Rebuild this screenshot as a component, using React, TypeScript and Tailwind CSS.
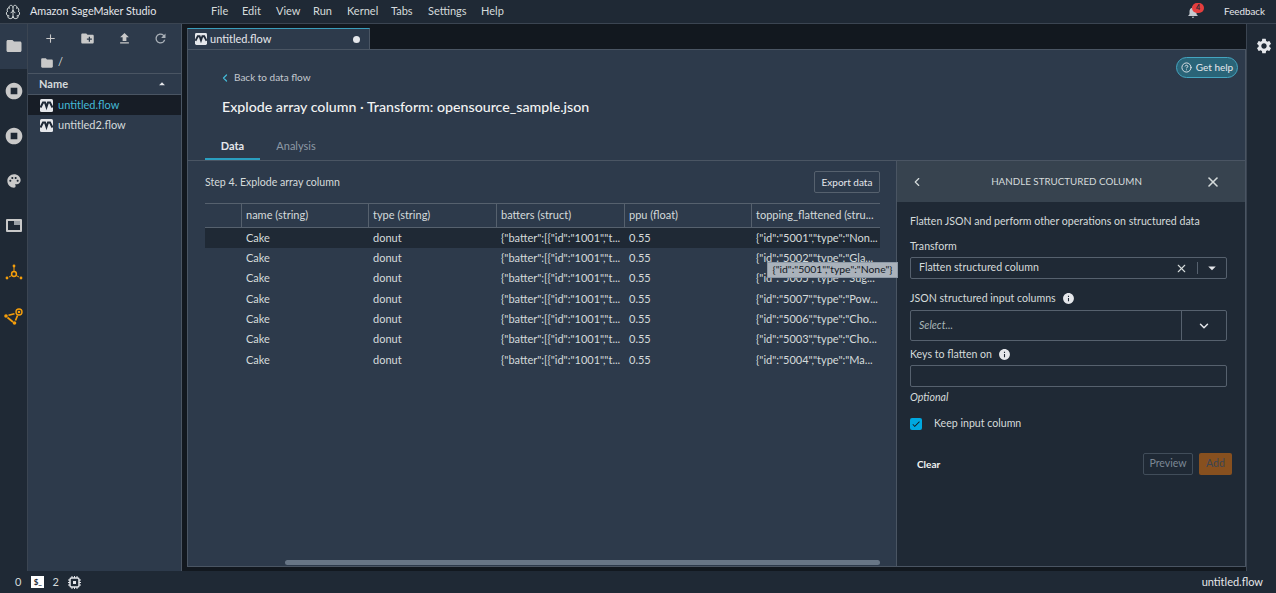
import { Brain, ChevronDown, ChevronLeft, CircleHelp, Plus, X } from 'lucide-react'
import {
  MdCheck, MdCreateNewFolder, MdFileUpload, MdFolder, MdInfo, MdNotifications,
  MdPalette, MdRefresh, MdSettings, MdStopCircle, MdArrowDropDown, MdArrowDropUp,
} from 'react-icons/md'

const MENU = [
  { label: 'File', w: 'w-[31px]' },
  { label: 'Edit', w: 'w-[34px]' },
  { label: 'View', w: 'w-[37px]' },
  { label: 'Run', w: 'w-[34px]' },
  { label: 'Kernel', w: 'w-[44px]' },
  { label: 'Tabs', w: 'w-[37px]' },
  { label: 'Settings', w: 'w-[53px]' },
  { label: 'Help', w: 'w-[30px]' },
]

const COLUMNS = [
  { label: 'name (string)', w: 'w-[127px]' },
  { label: 'type (string)', w: 'w-[128px]' },
  { label: 'batters (struct)', w: 'w-[128px]' },
  { label: 'ppu (float)', w: 'w-[127px]' },
  { label: 'topping_flattened (stru...', w: 'w-[128px]' },
]

const TOPPINGS = ['Non...', 'Gla...', 'Sug...', 'Pow...', 'Cho...', 'Cho...', 'Ma...']
const IDS = ['5001', '5002', '5005', '5007', '5006', '5003', '5004']

function FlowIcon({ size = 13 }: { size?: number }) {
  return (
    <svg width={size} height={size} viewBox="0 0 13 13" className="shrink-0">
      <rect width="13" height="13" rx="1.5" fill="#e5e7eb" />
      <path d="M0.5 8.5 L3 3.5 L5 3.5 L6.5 8 L8 3.5 L10 3.5 L12.5 8.5" fill="none" stroke="#1f2937" strokeWidth="2" />
    </svg>
  )
}

function OrangeNodes() {
  return (
    <svg width="18" height="16" viewBox="0 0 18 16" fill="#f59e0b" stroke="#f59e0b">
      <circle cx="9" cy="2" r="1.4" stroke="none" />
      <circle cx="2" cy="14" r="1.4" stroke="none" />
      <circle cx="16" cy="14" r="1.4" stroke="none" />
      <circle cx="9" cy="10" r="2.4" fill="none" strokeWidth="1.5" />
      <path d="M9 3v4M6.800 11.500L4 13M11.200 11.500L14 13" strokeWidth="1" />
    </svg>
  )
}

function OrangeGraph() {
  return (
    <svg width="19" height="17" viewBox="0 0 19 17" fill="#f59e0b" stroke="#f59e0b">
      <circle cx="2" cy="8" r="1.800" stroke="none" />
      <circle cx="10.500" cy="15" r="1.800" stroke="none" />
      <circle cx="15" cy="4" r="3" fill="none" strokeWidth="1.400" />
      <circle cx="15" cy="4" r="1.300" stroke="none" />
      <path d="M4.500 7.300L10.500 5.700M3.500 9.500L9 14M11.500 12.500L13.500 7.500" strokeWidth="1.700" />
    </svg>
  )
}

function RailItem({ children, active }: { children: React.ReactNode; active?: boolean }) {
  return (
    <div className={`flex h-[45px] items-center justify-center ${active ? 'bg-[#2d3a4b]' : ''}`}>
      {children}
    </div>
  )
}

function Cell({ children, w }: { children: React.ReactNode; w: string }) {
  return <div className={`${w} whitespace-nowrap pl-[4px] text-[#d5dbdb]`}>{children}</div>
}

export default function App() {
  return (
    <div className="flex h-[593px] w-[1276px] flex-col overflow-hidden bg-[#1f2935] font-['Lato',sans-serif] text-[11px] text-[#d5dbdb]">
      {/* top bar */}
      <header className="flex h-[24px] shrink-0 items-center border-b border-[#3b4552] pl-[5px]">
        <Brain size={16} strokeWidth={1.5} className="text-[#d5dbdb]" />
        <span className="ml-[9px] w-[181px] text-[10.8px] text-[#e5e7eb]">Amazon SageMaker Studio</span>
        {MENU.map(m => (
          <span key={m.label} className={`${m.w} text-[#d5dbdb]`}>{m.label}</span>
        ))}
        <div className="relative ml-auto mr-[11px] flex">
          <MdNotifications size={14} className="text-[#c5cad0]" />
          <span className="absolute left-[6px] top-[-2px] flex h-[10px] w-[12px] items-center justify-center rounded-full bg-[#e53e3e] text-[7px] font-bold text-[#1f2935]">4</span>
        </div>
        <span className="ml-[13px] mr-[11px] text-[9.8px] text-[#e5e7eb]">Feedback</span>
      </header>

      <div className="flex min-h-0 flex-1">
        {/* left rail */}
        <nav className="w-[28px] shrink-0 border-r border-[#3b4552]">
          <RailItem active><MdFolder size={18} className="-mt-[2px] text-[#c9c9c9]" /></RailItem>
          <RailItem><MdStopCircle size={20} className="-mt-[2px] text-[#c9c9c9]" /></RailItem>
          <RailItem><MdStopCircle size={20} className="-mt-[2px] text-[#c9c9c9]" /></RailItem>
          <RailItem><MdPalette size={16} className="-mt-[2px] text-[#c9c9c9]" /></RailItem>
          <RailItem>
            <div className="-mt-[2px] h-[13px] w-[16px] rounded-[1px] border-2 border-[#c9c9c9] bg-[#1f2935]">
              <div className="ml-auto h-[4px] w-[6px] bg-[#9aa0a6]" />
            </div>
          </RailItem>
          <RailItem><OrangeNodes /></RailItem>
          <RailItem><OrangeGraph /></RailItem>
        </nav>

        {/* file browser */}
        <aside className="w-[154px] shrink-0 border-r border-[#4a5563] bg-[#2d3a4b]">
          <div className="flex h-[28px] items-center text-[#c9c9c9]">
            <div className="flex w-[44px] justify-center"><Plus size={13} /></div>
            <div className="flex w-[30px] justify-center"><MdCreateNewFolder size={15} /></div>
            <div className="flex w-[44px] justify-center"><MdFileUpload size={15} /></div>
            <div className="flex w-[28px] justify-center"><MdRefresh size={15} className="text-[#a9b0b8]" /></div>
          </div>
          <div className="flex h-[21px] items-center gap-[4px] pl-[12px] text-[#d5dbdb]">
            <MdFolder size={14} className="text-[#c9c9c9]" /> /
          </div>
          <div className="flex h-[22px] items-center justify-between border-y border-[#4a5563] pl-[11px] pr-[12px] font-bold text-[#d5dbdb]">
            Name
            <MdArrowDropUp size={14} className="text-[#e5e7eb]" />
          </div>
          <div className="flex h-[20px] items-center gap-[5px] bg-[#171d26] pl-[12px] text-[#44b9d6]">
            <FlowIcon /> untitled.flow
          </div>
          <div className="flex h-[20px] items-center gap-[5px] pl-[12px] text-[#d5dbdb]">
            <FlowIcon /> untitled2.flow
          </div>
        </aside>

        {/* main dock area */}
        <main className="flex w-[1064px] shrink-0 flex-col bg-[#12181f] pb-[4px] pl-[5px]">
          <div className="flex h-[25px] shrink-0 items-end">
            <div className="flex h-[21px] w-[183px] items-center border-x border-t border-[#4a5563] border-t-[#3a9dbb] bg-[#2d3a4b] pl-[7px] pr-[9px] text-[#e5e7eb]">
              <FlowIcon size={12} />
              <span className="ml-[3px]">untitled.flow</span>
              <span className="ml-auto h-[7px] w-[7px] rounded-full bg-[#e5e7eb]" />
            </div>
          </div>

          <div className="relative flex min-h-0 flex-1 flex-col border border-[#4a5563] bg-[#2d3a4b]">
            {/* page header */}
            <div className="h-[111px] shrink-0 border-b border-[#4a5563]">
              <div className="flex items-start justify-between pl-[31px] pr-[7px] pt-[7px]">
                <div className="mt-[13px] flex items-center gap-[3px] text-[10px] text-[#c5cad0]">
                  <ChevronLeft size={12} strokeWidth={2.5} className="text-[#44b9d6]" />
                  Back to data flow
                </div>
                <div className="flex h-[21px] w-[62px] items-center justify-center gap-[4px] rounded-full border border-[#44a5c0] bg-[#2a6478] text-[10px] text-[#e5e7eb]">
                  <CircleHelp size={11} /> Get help
                </div>
              </div>
              <h1 className="mt-[12px] pl-[34px] text-[14.2px] font-medium leading-[20px] text-[#f2f3f3]">
                Explode array column · Transform: opensource_sample.json
              </h1>
              <div className="mt-[16px] flex pl-[17px]">
                <div className="flex h-[27px] w-[55px] justify-center border-b-2 border-[#2a9fc0] pt-[5px] font-bold text-[#e5e7eb]">Data</div>
                <div className="w-[72px] pt-[5px] text-center text-[#8d99a6]">Analysis</div>
              </div>
            </div>

            <div className="flex min-h-0 flex-1">
              {/* data grid */}
              <section className="w-[708px] shrink-0 pl-[17px] pr-[16px]">
                <div className="flex h-[42px] items-center justify-between">
                  <span className="pt-[1px] text-[10.6px] text-[#d5dbdb]">Step 4. Explode array column</span>
                  <button className="flex h-[22px] w-[66px] items-center justify-center rounded-[2px] border border-[#56616e] text-[10px] text-[#e5e7eb]">Export data</button>
                </div>
                <div className="flex h-[25px] items-center border-y border-[#56616e]">
                  <div className="h-full w-[37px] border-r border-[#56616e]" />
                  {COLUMNS.map(c => (
                    <div key={c.label} className={`${c.w} flex h-full items-center whitespace-nowrap border-r border-[#56616e] pl-[4px] last:border-r-0`}>{c.label}</div>
                  ))}
                </div>
                {TOPPINGS.map((t, i) => (
                  <div key={i} className={`flex h-[20.3px] items-center ${i === 0 ? 'bg-[#1f2935]' : ''}`}>
                    <div className="w-[37px]" />
                    <Cell w="w-[127px]">Cake</Cell>
                    <Cell w="w-[128px]">donut</Cell>
                    <Cell w="w-[128px]">{'{"batter":[{"id":"1001","t...'}</Cell>
                    <Cell w="w-[127px]">0.55</Cell>
                    <Cell w="w-[128px]">{`{"id":"${IDS[i]}","type":"${t}`}</Cell>
                  </div>
                ))}
              </section>

              {/* side panel */}
              <section className="flex-1 border-l border-[#4a5563] bg-[#1f2935] text-[10.6px]">
                <div className="flex h-[41px] items-center bg-[#37434f] pl-[13px] pr-[24px]">
                  <ChevronLeft size={14} strokeWidth={2} className="text-[#d5dbdb]" />
                  <span className="flex-1 pl-[4px] text-center text-[9.8px] text-[#d5dbdb]">HANDLE STRUCTURED COLUMN</span>
                  <X size={16} strokeWidth={2.4} className="text-[#d5dbdb]" />
                </div>
                <div className="pl-[13px] pr-[18px]">
                  <p className="mt-[12px] leading-[14px]">Flatten JSON and perform other operations on structured data</p>
                  <p className="mt-[11px] leading-[14px]">Transform</p>
                  <div className="mt-[4px] flex h-[22px] items-center rounded-[2px] border border-[#56616e] pl-[8px]">
                    <span className="flex-1">Flatten structured column</span>
                    <X size={13} className="mr-[9px]" />
                    <div className="h-[12px] w-px bg-[#56616e]" />
                    <MdArrowDropDown size={18} className="mx-[5px] text-[#e5e7eb]" />
                  </div>
                  <p className="mt-[12px] flex items-center gap-[6px] leading-[14px]">JSON structured input columns <MdInfo size={13} className="text-[#e5e7eb]" /></p>
                  <div className="mt-[5px] flex h-[31px] items-center rounded-[2px] border border-[#56616e]">
                    <span className="flex-1 pl-[8px] italic text-[#aab7b8]">Select...</span>
                    <div className="flex h-full w-[45px] items-center justify-center border-l border-[#56616e]">
                      <ChevronDown size={14} strokeWidth={2.5} className="text-[#e5e7eb]" />
                    </div>
                  </div>
                  <p className="mt-[6px] flex items-center gap-[6px] leading-[14px]">Keys to flatten on <MdInfo size={13} className="text-[#e5e7eb]" /></p>
                  <div className="mt-[4px] h-[22px] rounded-[2px] border border-[#56616e]" />
                  <p className="mt-[3px] italic leading-[14px]">Optional</p>
                  <div className="mt-[12px] flex items-center gap-[12px]">
                    <div className="flex h-[12px] w-[12px] items-center justify-center rounded-[2px] bg-[#00a8e0]">
                      <MdCheck size={10} className="text-[#12181f]" />
                    </div>
                    Keep input column
                  </div>
                  <div className="mt-[21px] flex items-center">
                    <span className="ml-[7px] flex-1 pt-[1px] text-[10px] font-bold text-[#f2f3f3]">Clear</span>
                    <button className="flex h-[22px] w-[50px] items-center justify-center rounded-[2px] border border-[#414d5a] text-[#7b8794]">Preview</button>
                    <button className="-mr-[5px] ml-[6px] flex h-[22px] w-[33px] items-center justify-center rounded-[2px] bg-[#87501f] text-[#3b4552]">Add</button>
                  </div>
                </div>
              </section>
            </div>

            {/* tooltip + horizontal scrollbar sit over the grid */}
            <div className="absolute left-[579px] top-[212px] z-10 flex h-[16px] w-[131px] items-center justify-center border border-[#8d99a6] bg-[#aab2bb] text-[10.4px] text-[#12181f]">
              {'{"id":"5001","type":"None"}'}
            </div>
            <div className="absolute bottom-[1px] left-[97px] h-[5px] w-[595px] rounded-full bg-[#687686]" />
          </div>
        </main>

        {/* right rail */}
        <aside className="flex flex-1 justify-end border-l border-[#3b4552]">
          <div className="flex h-[44px] w-[24px] items-center justify-center">
            <MdSettings size={18} className="text-[#e5e7eb]" />
          </div>
        </aside>
      </div>

      {/* status bar */}
      <footer className="flex h-[22px] shrink-0 items-center pl-[15px] pr-[13px]">
        <span>0</span>
        <span className="ml-[10px] flex h-[12px] w-[13px] items-end justify-center bg-white text-[8px] font-bold leading-[11px] text-[#1f2935]">$_</span>
        <span className="ml-[8px]">2</span>
        <svg width="13" height="13" viewBox="0 0 13 13" fill="none" stroke="#e5e7eb" className="ml-[9px]">
          <rect x="2" y="2" width="9" height="9" rx="1.500" strokeWidth="1.500" />
          <rect x="5" y="5" width="3" height="3" fill="#e5e7eb" stroke="none" />
          <path d="M4 0v2M6.500 0v2M9 0v2M4 11v2M6.500 11v2M9 11v2M0 4h2M0 6.500h2M0 9h2M11 4h2M11 6.500h2M11 9h2" strokeWidth="1" />
        </svg>
        <span className="ml-auto text-[#e5e7eb]">untitled.flow</span>
      </footer>
    </div>
  )
}
